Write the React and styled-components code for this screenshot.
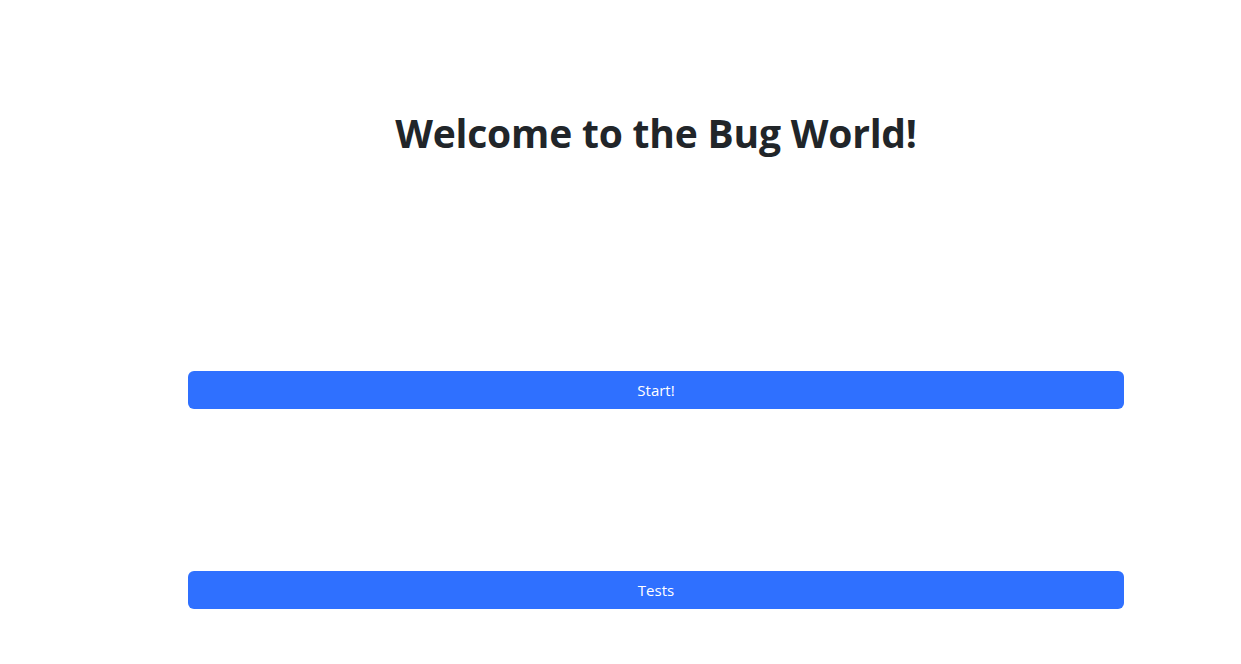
import { createGlobalStyle, styled } from 'styled-components'

const GlobalStyle = createGlobalStyle`
  html, body {
    margin: 0;
    padding: 0;
    background: #fff;
  }

  body {
    font-family: 'Open Sans', 'Noto Sans', 'Liberation Sans', sans-serif;
    color: #212529;
  }
`

function App() {
  return (
    <>
      <GlobalStyle />
      <Page>
        <Title>Welcome to the Bug World!</Title>
        <Actions>
          <ActionButton type='button'>Start!</ActionButton>
          <ActionButton type='button'>Tests</ActionButton>
        </Actions>
      </Page>
    </>
  )
}

export default App

const Page = styled.main`
  width: 936px;
  margin-left: 188px;
  padding-top: 109px;
  display: flex;
  flex-direction: column;
`

const Title = styled.h1`
  margin: 0;
  height: 48px;
  font-size: 39px;
  font-weight: 700;
  line-height: 48px;
  text-align: center;
  color: #212529;
  letter-spacing: -0.2px;
`

const Actions = styled.div`
  margin-top: 214px;
  display: flex;
  flex-direction: column;
  gap: 162px;
`

const ActionButton = styled.button`
  height: 38px;
  width: 100%;
  border: none;
  border-radius: 6px;
  background: #2f70ff;
  color: #fff;
  font-family: inherit;
  font-size: 15px;
  cursor: pointer;
`
